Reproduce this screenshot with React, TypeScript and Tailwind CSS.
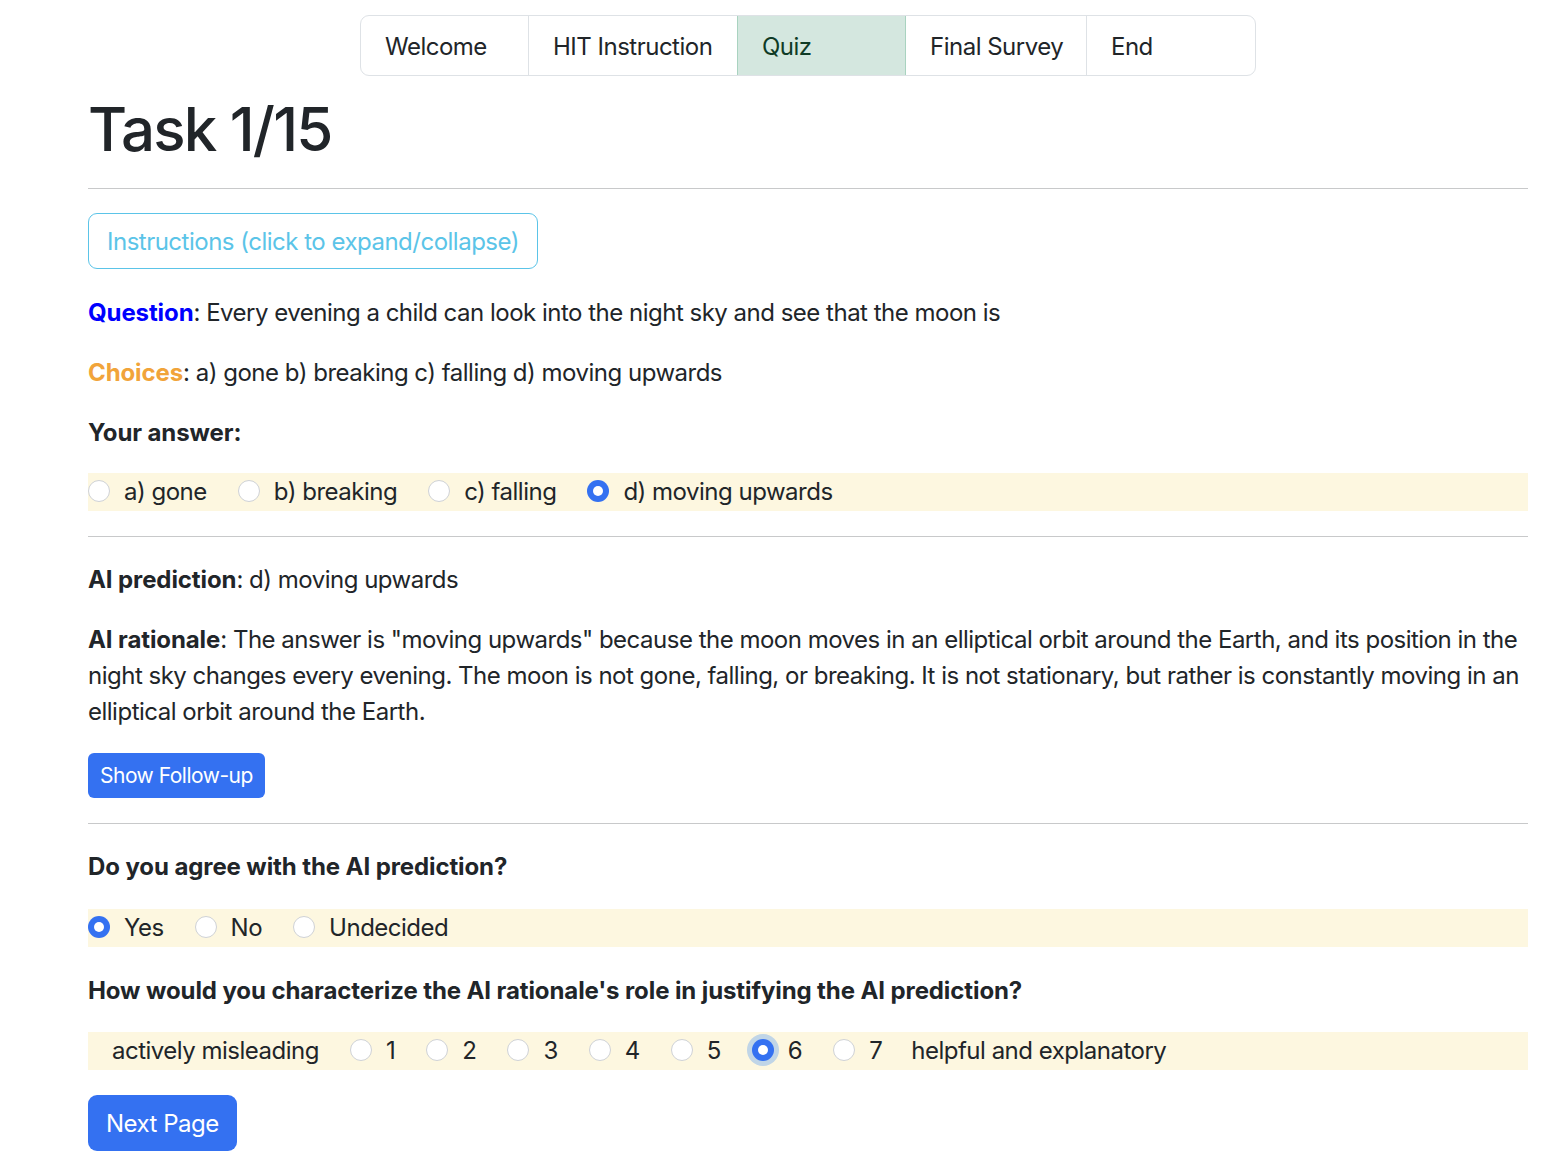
import React from "react";

function Radio({ checked, focus }: { checked?: boolean; focus?: boolean }) {
  if (checked) {
    return (
      <span
        className={
          "w-[22px] h-[22px] rounded-full bg-[#3471f1] flex items-center justify-center shrink-0 mb-[2px] " +
          (focus ? "shadow-[0_0_0_5px_rgba(13,110,253,0.25)]" : "")
        }
      >
        <span className="w-[10px] h-[10px] rounded-full bg-white" />
      </span>
    );
  }
  return <span className="w-[22px] h-[22px] rounded-full bg-white border border-[#cfd2d6] shrink-0 mb-[2px]" />;
}

function Option({ label, checked, focus, last }: { label: string; checked?: boolean; focus?: boolean; last?: boolean }) {
  return (
    <div className={"flex items-center " + (last ? "" : "mr-[31px]")}>
      <div className="w-[36px] shrink-0 flex items-center">
        <Radio checked={checked} focus={focus} />
      </div>
      <span className="whitespace-nowrap">{label}</span>
    </div>
  );
}

function Hr({ className = "" }: { className?: string }) {
  return <div className={"h-px bg-[#c8c9ca] w-full " + className} />;
}

export default function App() {
  const navItems = [
    { label: "Welcome", w: "w-[167px]" },
    { label: "HIT Instruction", w: "w-[209px]" },
    { label: "Quiz", w: "w-[168px]", active: true },
    { label: "Final Survey", w: "w-[181px]" },
    { label: "End", w: "w-[169px]" },
  ];
  return (
    <div className="min-h-[1176px] bg-white font-['Inter','Noto_Sans',sans-serif] text-[#212529] text-[24px] leading-[36px] tracking-[-0.5px]">
      <div className="ml-[88px] w-[1440px] pt-[15px] flex flex-col">
        {/* Nav */}
        <div className="self-center flex h-[61px] border border-[#dee2e6] rounded-[9px] overflow-hidden">
          {navItems.map((it, i) => (
            <div
              key={it.label}
              className={
                it.w +
                " flex items-center px-[24px] pt-[2px] whitespace-nowrap " +
                (i > 0 ? "border-l " : "") +
                (it.active
                  ? "bg-[#d4e7df] text-[#0f3b26] border-[#a9d3c0]"
                  : "border-[#dee2e6]") +
                (i === 3 ? " border-l-[#a9d3c0]" : "")
              }
            >
              {it.label}
            </div>
          ))}
        </div>

        <h1 className="mt-[17px] text-[60px] leading-[72px] font-medium tracking-[-1.8px]">Task 1/15</h1>

        <Hr className="mt-[23px]" />

        <button className="mt-[24px] self-start h-[56px] px-[18px] pt-[2px] border border-[#5bc4e8] text-[#5bc4e8] rounded-[9px] bg-white">
          Instructions (click to expand/collapse)
        </button>

        <p className="mt-[26px]">
          <b className="font-bold tracking-[-0.1px] text-[#0000ff]">Question</b>: Every evening a child can look into the night sky and see that the moon is
        </p>
        <p className="mt-[24px]">
          <b className="font-bold tracking-[-0.1px] text-[#f1a43a]">Choices</b>: a) gone b) breaking c) falling d) moving upwards
        </p>
        <p className="mt-[24px] font-bold tracking-[-0.1px]">Your answer:</p>

        <div className="mt-[22px] h-[38px] bg-[#fdf7e0] flex items-center">
          <Option label="a) gone" />
          <Option label="b) breaking" />
          <Option label="c) falling" />
          <Option label="d) moving upwards" checked last />
        </div>

        <Hr className="mt-[25px]" />

        <p className="mt-[25px]">
          <b className="font-bold tracking-[-0.1px]">AI prediction</b>: d) moving upwards
        </p>
        <p className="mt-[24px]">
          <b className="font-bold tracking-[-0.1px]">AI rationale</b>: The answer is "moving upwards" because the moon moves in an elliptical orbit around the Earth, and its position in the night sky changes every evening. The moon is not gone, falling, or breaking. It is not stationary, but rather is constantly moving in an elliptical orbit around the Earth.
        </p>

        <button className="mt-[23px] self-start h-[45px] px-[12px] text-[21px] leading-[31px] bg-[#3471f1] text-white rounded-[6px]">
          Show Follow-up
        </button>

        <Hr className="mt-[25px]" />

        <p className="mt-[25px] font-bold tracking-[-0.1px]">Do you agree with the AI prediction?</p>

        <div className="mt-[24px] h-[38px] bg-[#fdf7e0] flex items-center">
          <Option label="Yes" checked />
          <Option label="No" />
          <Option label="Undecided" last />
        </div>

        <p className="mt-[26px] font-bold tracking-[-0.1px]">How would you characterize the AI rationale's role in justifying the AI prediction?</p>

        <div className="mt-[23px] h-[38px] bg-[#fdf7e0] flex items-center pl-[24px]">
          <span className="mr-[31px] whitespace-nowrap">actively misleading</span>
          <Option label="1" />
          <Option label="2" />
          <Option label="3" />
          <Option label="4" />
          <Option label="5" />
          <Option label="6" checked focus />
          <Option label="7" />
          <span className="whitespace-nowrap -ml-[2px]">helpful and explanatory</span>
        </div>

        <button className="mt-[25px] self-start h-[56px] px-[18px] pt-[2px] bg-[#3471f1] text-white rounded-[9px]">
          Next Page
        </button>
      </div>
    </div>
  );
}
